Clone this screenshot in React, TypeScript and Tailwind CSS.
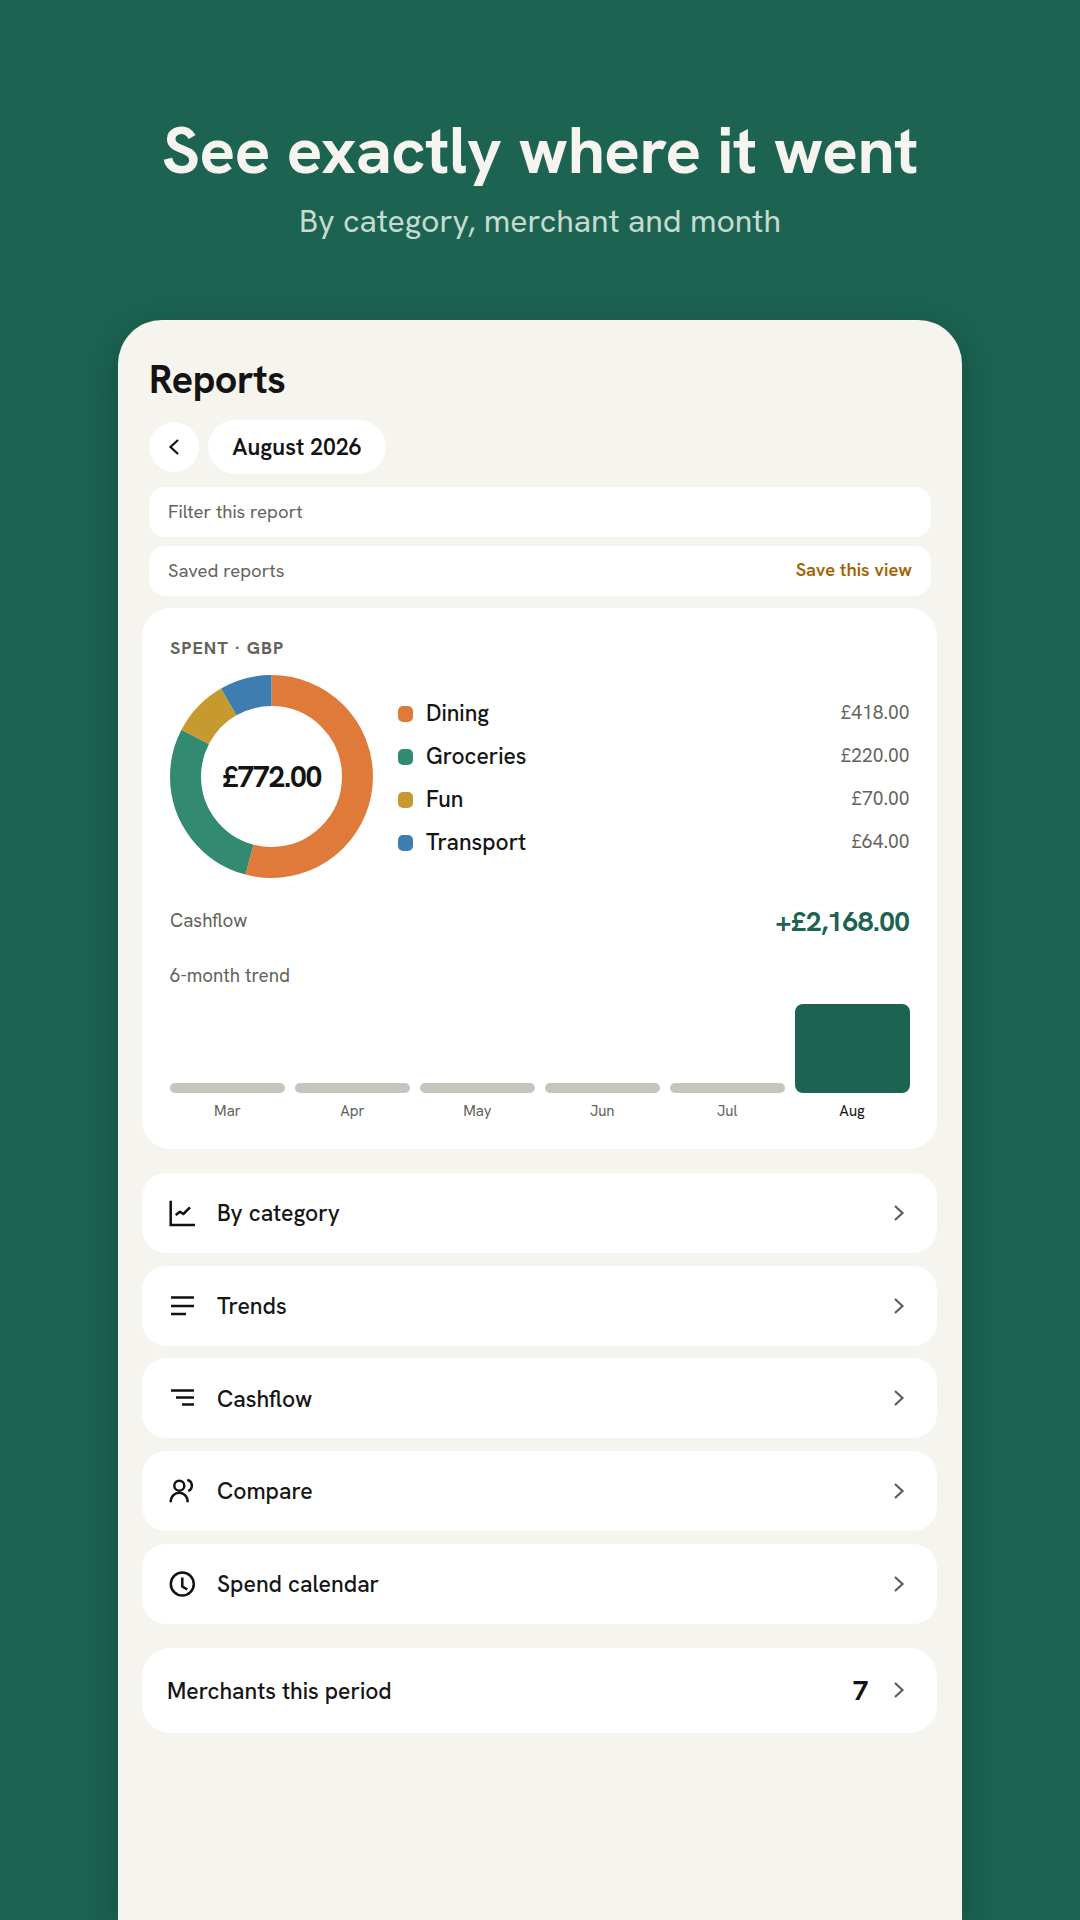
const font = { fontFamily: '"Hanken Grotesk", Inter, "Liberation Sans", sans-serif' };

function Chevron({ className = "" }: { className?: string }) {
  return (
    <svg width="12" height="18" viewBox="0 0 12 18" fill="none" stroke="currentColor" strokeWidth="2.2" className={className}>
      <path d="M2 2l7.500 7L2 16" />
    </svg>
  );
}

const icons: Record<string, React.ReactNode> = {
  chart: (
    <>
      <path d="M1.700 1.700V26H26" />
      <path d="M6.700 16l4.300-3.300 3.300 2.300 6.700-6.700" strokeLinejoin="round" />
    </>
  ),
  trends: <path d="M2 5.500h23M2 14h23M2 22h15" />,
  cash: <path d="M2 6.500h23M7 13.500h18M13 20.500h12" />,
  compare: (
    <>
      <circle cx="10.300" cy="8.700" r="5" />
      <path d="M1.700 25.300C1.700 12.500 18.700 12.500 18.700 25.300" />
      <path d="M18.300 3A5.800 5.800 0 0 1 19.300 14" />
    </>
  ),
  clock: (
    <>
      <circle cx="13.300" cy="14" r="11.500" />
      <path d="M13.300 7.500v9l5 3" />
    </>
  ),
};

function Row({ icon, label }: { icon: string; label: string }) {
  return (
    <div className="flex h-[80px] items-center rounded-[24px] bg-white pl-[27px] pr-[32.500px]">
      <svg width="28" height="28" viewBox="0 0 28 28" fill="none" stroke="#111" strokeWidth="2.500" className="shrink-0">
        {icons[icon]}
      </svg>
      <span className="ml-[20px] pt-[1px] text-[23px] font-medium text-[#151515]">{label}</span>
      <Chevron className="ml-auto text-[#5f5f58]" />
    </div>
  );
}

const legend = [
  ["Dining", "£418.00", "#e07a3a"],
  ["Groceries", "£220.00", "#328b70"],
  ["Fun", "£70.00", "#c79a30"],
  ["Transport", "£64.00", "#3f7cb0"],
];

const segs: [number, string][] = [
  [418, "#e07a3a"],
  [220, "#328b70"],
  [70, "#c79a30"],
  [64, "#3f7cb0"],
];

function Donut() {
  let off = 0;
  return (
    <div className="relative h-[203px] w-[203px] shrink-0">
      <svg width="203" height="203" viewBox="0 0 203 203" className="-rotate-90">
        {segs.map(([v, c]) => {
          const el = (
            <circle key={c} cx="101.500" cy="101.500" r="86" fill="none" stroke={c} strokeWidth="31" pathLength={772} strokeDasharray={`${v} ${772 - v}`} strokeDashoffset={-off} />
          );
          off += v;
          return el;
        })}
      </svg>
      <div className="absolute inset-0 flex items-center justify-center text-[30px] font-bold tracking-[-1.3px] text-[#141414]">£772.00</div>
    </div>
  );
}

export default function App() {
  return (
    <div className="h-[1920px] w-[1080px] overflow-hidden bg-[#1c6351]" style={font}>
      <div className="flex h-[320px] flex-col items-center pt-[112px]">
        <h1 className="text-[66px] font-bold leading-[76px] tracking-[-0.5px] text-[#f6f4ef]">See exactly where it went</h1>
        <p className="mt-[13px] text-[32px] leading-[40px] text-[#c5dbd0]">By category, merchant and month</p>
      </div>
      <div className="mx-[118px] h-[1600px] rounded-t-[44px] bg-[#f6f4ef] px-[25px] pt-[35px] shadow-[0_10px_40px_rgba(0,0,0,0.22)]">
        <h2 className="pl-[6px] text-[39.500px] font-bold leading-[48px] tracking-[-0.5px] text-[#141414]">Reports</h2>
        <div className="mt-[17px] flex items-center gap-[9px] pl-[6px]">
          <div className="flex h-[50px] w-[50px] items-center justify-center rounded-full bg-white">
            <Chevron className="rotate-180 text-[#111]" />
          </div>
          <div className="flex h-[54px] w-[178px] items-center justify-center rounded-full bg-white pt-[1px] text-[23px] font-semibold text-[#141414]">August 2026</div>
        </div>
        <div className="mx-[6px] mt-[13px] flex h-[50px] items-center rounded-[16px] bg-white px-[19px] text-[18.500px] text-[#63635b]">Filter this report</div>
        <div className="mx-[6px] mt-[9px] flex h-[50px] items-center justify-between rounded-[16px] bg-white px-[19px] text-[18.500px] text-[#63635b]">
          <span>Saved reports</span>
          <span className="text-[18.300px] font-semibold text-[#a06400]">Save this view</span>
        </div>
        <div className="ml-[-1px] mt-[12px] h-[541px] rounded-[28px] bg-white pl-[28px] pr-[27.500px] pt-[30px]">
          <div className="text-[18px] font-bold leading-[20px] tracking-[1px] text-[#63635b]">SPENT · GBP</div>
          <div className="mt-[17px] flex items-center">
            <Donut />
            <div className="ml-[25px] flex flex-1 flex-col gap-[11px] pt-[3px]">
              {legend.map(([l, v, c]) => (
                <div key={l} className="flex h-[32px] items-center">
                  <span className="h-[16px] w-[15px] rounded-[5px]" style={{ background: c }} />
                  <span className="ml-[13px] text-[22.800px] font-medium text-[#141414]">{l}</span>
                  <span className="ml-auto text-[19.200px] text-[#63635b]">{v}</span>
                </div>
              ))}
            </div>
          </div>
          <div className="mt-[23px] flex h-[40px] items-center justify-between">
            <span className="text-[18.800px] text-[#63635b]">Cashflow</span>
            <span className="text-[28px] font-bold tracking-[-0.5px] text-[#1c6351]">+£2,168.00</span>
          </div>
          <div className="mt-[23px] text-[18.800px] leading-[24px] text-[#63635b]">6-month trend</div>
          <div className="mt-[15px] flex h-[90px] items-end gap-[10px]">
            {[0, 1, 2, 3, 4].map((i) => (
              <div key={i} className="h-[10px] flex-1 rounded-[5px] bg-[#c6c5be]" />
            ))}
            <div className="h-[89px] flex-1 rounded-[8px] bg-[#1c6351]" />
          </div>
          <div className="mt-[8px] flex gap-[10px] text-center text-[15px] leading-[20px] text-[#63635b]">
            {["Mar", "Apr", "May", "Jun", "Jul"].map((m) => (
              <span key={m} className="flex-1">{m}</span>
            ))}
            <span className="flex-1 font-normal text-[#141414]">Aug</span>
          </div>
        </div>
        <div className="ml-[-1px] mt-[24px] flex flex-col gap-[12.700px]">
          <Row icon="chart" label="By category" />
          <Row icon="trends" label="Trends" />
          <Row icon="cash" label="Cashflow" />
          <Row icon="compare" label="Compare" />
          <Row icon="clock" label="Spend calendar" />
        </div>
        <div className="ml-[-1px] mt-[24px] flex h-[85px] items-center rounded-[28px] bg-white pl-[25px] pr-[32.500px]">
          <span className="pt-[1px] text-[22.900px] font-medium text-[#151515]">Merchants this period</span>
          <span className="ml-auto mr-[24px] text-[28px] font-bold text-[#141414]">7</span>
          <Chevron className="text-[#5f5f58]" />
        </div>
      </div>
    </div>
  );
}
